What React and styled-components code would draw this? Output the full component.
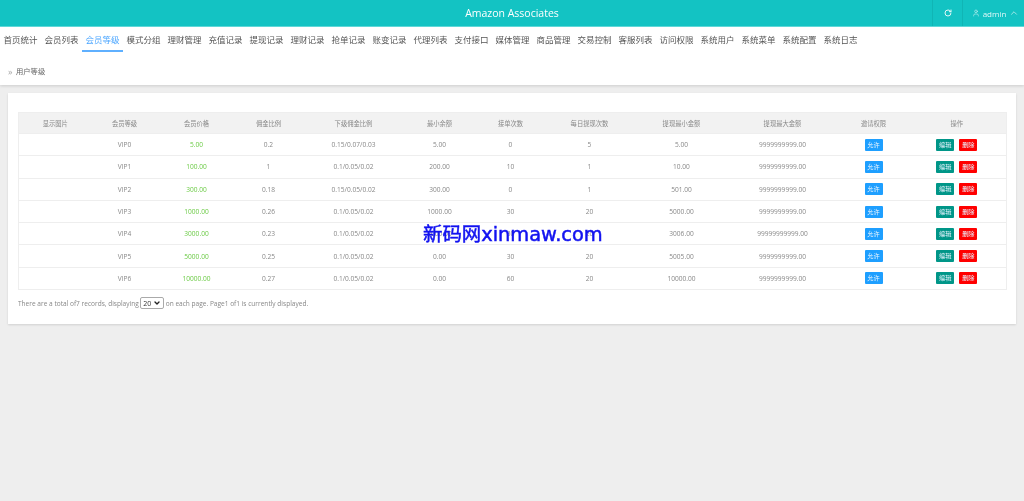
import React from 'react';
import styled, { createGlobalStyle } from 'styled-components';
import { RotateCw, User, ChevronUp, ChevronDown } from 'lucide-react';

const GlobalStyle = createGlobalStyle`
    html, body {
        margin: 0;
        padding: 0;
        background: #eeeeee;
        overflow: hidden;
    }
    body {
        font-family: "Open Sans", "Noto Sans CJK SC", sans-serif;
    }
`;

// the reference is a soft, downscaled shot, the filter also keeps small text grey
const Page = styled.div`
    min-height: 501px;
    display: flex;
    flex-direction: column;
    position: relative;
    filter: blur(.3px);
`;

const Header = styled.header`
    height: 26px;
    display: flex;
    align-items: center;
    justify-content: flex-end;
    position: relative;
    background: #13c3c3;
    border-bottom: 1px solid #5fd8d8;
    color: #fff;
`;

const Title = styled.div`
    position: absolute;
    left: 0;
    right: 0;
    text-align: center;
    font-size: 10.5px;
    font-weight: 500;
    line-height: 26px;
`;

const HeaderCell = styled.div`
    height: 26px;
    width: ${p => p.$w}px;
    padding-left: ${p => p.$pad || 0}px;
    display: flex;
    align-items: center;
    justify-content: center;
    gap: 3px;
    border-left: 1px solid #10b5b5;
    box-sizing: border-box;
    font-size: 8px;
    color: #e0f8f8;
`;

const Panel = styled.div`
    background: #fff;
    height: 58px;
    display: flex;
    flex-direction: column;
    box-shadow: 0 1px 3px rgba(0, 0, 0, .14);
`;

const Tabs = styled.nav`
    display: flex;
    height: 25px;
`;

const Tab = styled.a`
    width: 41px;
    flex: none;
    height: 25px;
    box-sizing: border-box;
    padding-top: 7px;
    text-align: center;
    font-size: 8.5px;
    line-height: 12px;
    color: ${p => (p.$active ? '#4fa8ff' : '#555')};
    border-bottom: 2px solid ${p => (p.$active ? '#5fb0ff' : 'transparent')};
`;

const Crumb = styled.div`
    margin-top: 14px;
    padding-left: 8px;
    display: flex;
    align-items: center;
    font-size: 7.3px;
    line-height: 11px;
    color: #666;
`;

const CrumbMark = styled.span`
    width: 8px;
    color: #aaa;
    font-size: 9px;
`;

const Card = styled.main`
    margin: 8px 8px 0;
    height: 231px;
    box-sizing: border-box;
    padding: 19px 10px 0;
    background: #fff;
    box-shadow: 0 1px 2px rgba(0, 0, 0, .12);
`;

const Table = styled.table`
    width: 988px;
    table-layout: fixed;
    border-collapse: collapse;
    font-size: 6.6px;
    color: #888;
    border: 1px solid #eeeeee;
`;

const HeadCell = styled.th`
    height: 20px;
    padding: 0 0 0 ${p => p.$nudge || 0}px;
    font-size: 6.3px;
    font-weight: 400;
    text-align: center;
    background: #f2f2f2;
    border-bottom: 1px solid #eeeeee;
    color: #888;
`;

const Cell = styled.td`
    height: 22.3px;
    padding: 0;
    box-sizing: border-box;
    text-align: center;
    border-bottom: 1px solid #eeeeee;
    color: ${p => (p.$green ? '#6ccb46' : '#888')};
    font-weight: ${p => (p.$green ? 500 : 400)};
`;

const Tag = styled.span`
    display: inline-block;
    width: 18px;
    height: 12px;
    line-height: 12px;
    margin: 0 2.6px;
    border-radius: 1px;
    font-size: 6.2px;
    font-weight: 400;
    text-align: center;
    vertical-align: middle;
    color: #e8f4ff;
    background: ${p => p.$bg};
`;

const Footer = styled.div`
    margin-top: 7px;
    display: flex;
    align-items: center;
    gap: 1.5px;
    font-size: 6.55px;
    color: #888;
`;

const SelectBox = styled.span`
    position: relative;
    display: inline-block;
    width: 24px;
    height: 12px;
`;

const PageSelect = styled.select`
    appearance: none;
    display: block;
    width: 24px;
    height: 12px;
    box-sizing: border-box;
    padding: 0 0 0 2px;
    font-size: 7px;
    font-family: inherit;
    color: #333;
    background: #fff;
    border: 1px solid #aaa;
    border-radius: 2px;
`;

const SelectArrow = styled.span`
    position: absolute;
    right: 3px;
    top: 2px;
    display: flex;
    color: #222;
`;

const Watermark = styled.div`
    position: absolute;
    left: 423px;
    top: 221px;
    font-family: "DejaVu Sans", "Noto Sans CJK SC", sans-serif;
    font-size: 19.4px;
    line-height: 27px;
    -webkit-text-stroke: .5px #1212f0;
    color: #1212f0;
    white-space: nowrap;
`;

const tabs = ['首页统计', '会员列表', '会员等级', '模式分组', '理财管理', '充值记录', '提现记录', '理财记录', '抢单记录', '账变记录', '代理列表', '支付接口', '媒体管理', '商品管理', '交易控制', '客服列表', '访问权限', '系统用户', '系统菜单', '系统配置', '系统日志'];

const widths = [67, 78, 66, 78, 92, 80, 62, 96, 88, 114, 68, 99];
const heads = ['显示图片', '会员等级', '会员价格', '佣金比例', '下级佣金比例', '最小余额', '接单次数', '每日提现次数', '提现最小金额', '提现最大金额', '邀请权限', '操作'];

const rows = [
    ['VIP0', '5.00', '0.2', '0.15/0.07/0.03', '5.00', '0', '5', '5.00', '9999999999.00'],
    ['VIP1', '100.00', '1', '0.1/0.05/0.02', '200.00', '10', '1', '10.00', '9999999999.00'],
    ['VIP2', '300.00', '0.18', '0.15/0.05/0.02', '300.00', '0', '1', '501.00', '9999999999.00'],
    ['VIP3', '1000.00', '0.26', '0.1/0.05/0.02', '1000.00', '30', '20', '5000.00', '9999999999.00'],
    ['VIP4', '3000.00', '0.23', '0.1/0.05/0.02', '3000.00', '30', '20', '3006.00', '99999999999.00'],
    ['VIP5', '5000.00', '0.25', '0.1/0.05/0.02', '0.00', '30', '20', '5005.00', '9999999999.00'],
    ['VIP6', '10000.00', '0.27', '0.1/0.05/0.02', '0.00', '60', '20', '10000.00', '9999999999.00'],
];

export default function App() {
    return <Page>
        <GlobalStyle />
        <Header>
            <Title>Amazon Associates</Title>
            <HeaderCell $w={30}><RotateCw size={8} strokeWidth={3} /></HeaderCell>
            <HeaderCell $w={62} $pad={4}>
                <User size={8} strokeWidth={1.6} />
                admin
                <ChevronUp size={10} strokeWidth={1.6} />
            </HeaderCell>
        </Header>
        <Panel>
            <Tabs>
                {tabs.map(t => <Tab key={t} $active={t === '会员等级'}>{t}</Tab>)}
            </Tabs>
            <Crumb><CrumbMark>»</CrumbMark>用户等级</Crumb>
        </Panel>
        <Card>
            <Table>
                <colgroup>
                    {widths.map((w, i) => <col key={i} width={w} />)}
                </colgroup>
                <thead>
                    <tr>{heads.map((h, i) => <HeadCell key={h} $nudge={i === 0 ? 6 : 0}>{h}</HeadCell>)}</tr>
                </thead>
                <tbody>
                    {rows.map(r => <tr key={r[0]}>
                        <Cell />
                        {r.map((v, i) => <Cell key={i} $green={i === 1}>{v}</Cell>)}
                        <Cell><Tag $bg="#1e9fff">允许</Tag></Cell>
                        <Cell>
                            <Tag $bg="#009688">编辑</Tag>
                            <Tag $bg="#ff0000">删除</Tag>
                        </Cell>
                    </tr>)}
                </tbody>
            </Table>
            <Footer>
                There are a total of7 records, displaying
                <SelectBox>
                    <PageSelect defaultValue="20"><option>20</option></PageSelect>
                    <SelectArrow><ChevronDown size={8} strokeWidth={4} /></SelectArrow>
                </SelectBox>
                on each page. Page1 of1 is currently displayed.
            </Footer>
        </Card>
        <Watermark>新码网xinmaw.com</Watermark>
    </Page>;
}
